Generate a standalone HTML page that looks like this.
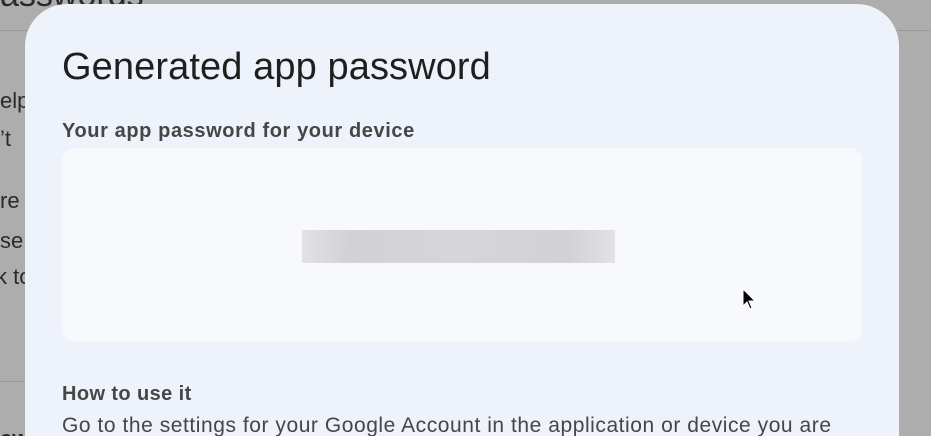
<!DOCTYPE html>
<html><head><style>
html,body{margin:0;width:931px;height:436px;overflow:hidden}
body{background:#adadad;font-family:"Liberation Sans",sans-serif;position:relative}
.bg{position:absolute;color:#2a2a2a;font-size:22px;white-space:nowrap}
.line{position:absolute;height:1px;background:#9a9a9a}
.modal{position:absolute;left:25px;top:4px;width:874px;height:432px;background:#eef2fa;border-radius:42px 42px 0 0;overflow:hidden}
h1{position:absolute;left:37px;top:42px;margin:0;font-weight:400;font-size:38px;color:#1f1f1f;letter-spacing:0.1px}
.sub{position:absolute;left:37px;top:116px;font-size:20px;font-weight:bold;color:#444746;letter-spacing:0.6px}
.box{position:absolute;left:37px;top:144px;width:800px;height:193px;background:#f8f9fd;border-radius:12px}
.pw{position:absolute;left:240px;top:82px;width:313px;height:33px;background:linear-gradient(90deg,#e2e2e4,#d2d2d4 15%,#d6d6d8 50%,#d2d2d4 85%,#e2e2e4)}
.h2{position:absolute;left:37px;top:379px;font-size:20px;font-weight:bold;color:#444746;letter-spacing:0.4px}
.p{position:absolute;left:37px;top:410px;font-size:21px;color:#444746;white-space:nowrap;letter-spacing:0.55px}
</style></head><body>
<div class="bg" style="left:0;top:-24px;font-size:34px">asswords</div>
<div class="line" style="left:0;top:30px;width:931px"></div>
<div class="line" style="left:0;top:381px;width:30px"></div>
<div class="bg" style="left:0;top:88px">elp</div>
<div class="bg" style="left:0;top:126px">’t</div>
<div class="bg" style="left:0;top:188px">re</div>
<div class="bg" style="left:0;top:228px">se</div>
<div class="bg" style="left:-4px;top:264px">k to</div>
<div class="bg" style="left:0;top:426px;font-weight:bold">ew</div>
<div class="modal">
<h1>Generated app password</h1>
<div class="sub">Your app password for your device</div>
<div class="box"><div class="pw"></div>
<svg style="position:absolute;left:680px;top:140px" width="14" height="24" viewBox="0 0 14 24"><path d="M1 1 L1 18 L5 14 L8 21 L10 20 L7 13 L13 13 Z" fill="#000" stroke="#fff" stroke-width="1"/></svg>
</div>
<div class="h2">How to use it</div>
<div class="p">Go to the settings for your Google Account in the application or device you are</div>
</div>
</body></html>
